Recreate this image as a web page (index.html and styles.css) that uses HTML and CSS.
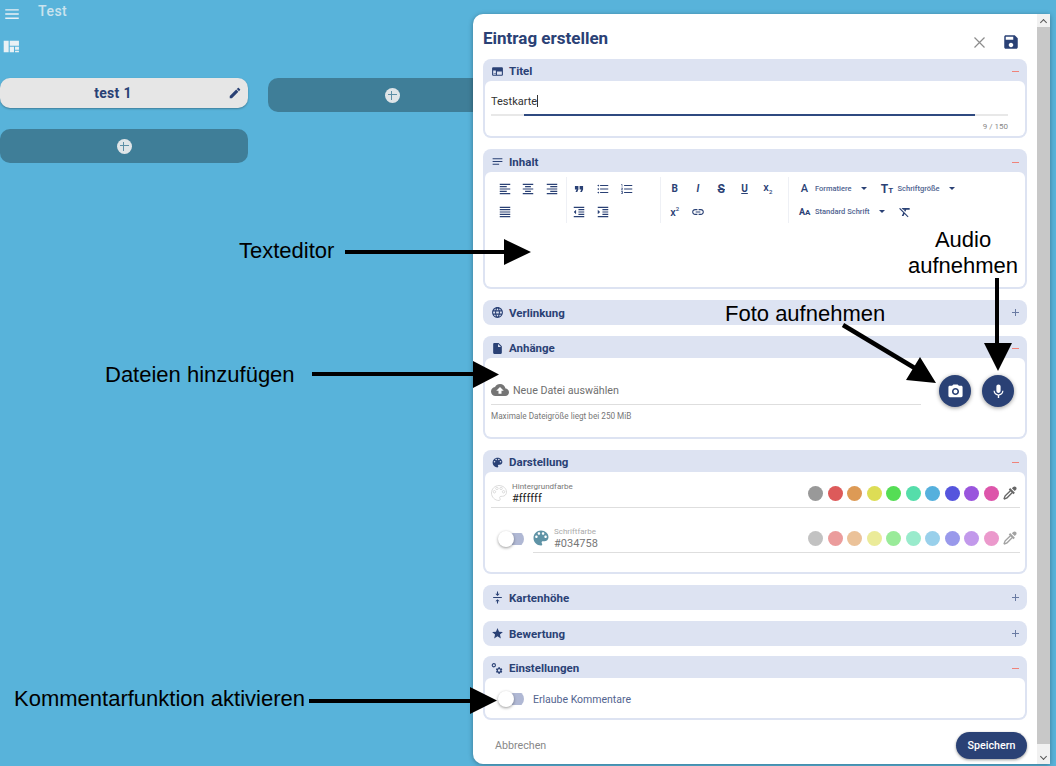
FILE: index.html
```html
<!DOCTYPE html>
<html lang="de">
<head>
    <meta charset="UTF-8">
    <title>Eintrag erstellen</title>
    <link rel="stylesheet" href="styles.css">
</head>
<body>
    <svg class="sprite" xmlns="http://www.w3.org/2000/svg">
        <symbol id="i-menu" viewBox="0 0 24 24"><path d="M3 18.500h18v-1.800H3v1.800zm0-5.600h18v-1.800H3v1.800zM3 5.500v1.800h18V5.500H3z"/></symbol>
        <symbol id="i-quilt" viewBox="0 0 24 24"><path d="M1 4h7v16H1zM9.500 4h13v7h-13zM9.500 12.500h6V20h-6zM17 12.500h5.500v4H17zM17 18h5.500v2H17z"/></symbol>
        <symbol id="i-pencil" viewBox="0 0 24 24"><path d="M3 17.250V21h3.750L17.810 9.940l-3.750-3.750L3 17.250zM20.710 7.040c.39-.39.39-1.020 0-1.410l-2.340-2.340c-.39-.39-1.020-.39-1.410 0l-1.830 1.830 3.750 3.750 1.830-1.830z"/></symbol>
        <symbol id="i-save" viewBox="0 0 24 24"><path d="M17 3H5c-1.110 0-2 .9-2 2v14c0 1.100.89 2 2 2h14c1.100 0 2-.9 2-2V7l-4-4zm-5 16c-1.660 0-3-1.340-3-3s1.340-3 3-3 3 1.340 3 3-1.340 3-3 3zm3-10H5V5h10v4z"/></symbol>
        <symbol id="i-title" viewBox="0 0 24 24"><path d="M4 4h16a2 2 0 0 1 2 2v12a2 2 0 0 1-2 2H4a2 2 0 0 1-2-2V6a2 2 0 0 1 2-2zm0 6v8h5v-2H5v-1h4v-5H4zm7 2v6h9v-6h-9z"/></symbol>
        <symbol id="i-notes" viewBox="0 0 24 24"><path d="M3 18h12v-2H3v2zM3 6v2h18V6H3zm0 7h18v-2H3v2z"/></symbol>
        <symbol id="i-globe" viewBox="0 0 24 24"><path d="M11.990 2C6.470 2 2 6.480 2 12s4.470 10 9.990 10C17.520 22 22 17.520 22 12S17.520 2 11.990 2zm6.930 6h-2.950c-.32-1.250-.78-2.450-1.380-3.560 1.840.63 3.370 1.910 4.330 3.560zM12 4.040c.83 1.200 1.480 2.530 1.910 3.960h-3.820c.43-1.430 1.080-2.760 1.910-3.960zM4.260 14C4.100 13.360 4 12.690 4 12s.1-1.360.26-2h3.380c-.08.66-.14 1.320-.14 2 0 .68.06 1.340.14 2H4.260zm.82 2h2.950c.32 1.250.78 2.450 1.380 3.560-1.840-.63-3.370-1.900-4.330-3.560zm2.950-8H5.080c.96-1.660 2.490-2.930 4.330-3.560C8.810 5.550 8.350 6.750 8.030 8zM12 19.960c-.83-1.200-1.480-2.530-1.910-3.960h3.820c-.43 1.430-1.080 2.760-1.910 3.960zM14.340 14H9.660c-.09-.66-.16-1.320-.16-2 0-.68.07-1.350.16-2h4.680c.09.65.16 1.320.16 2 0 .68-.07 1.340-.16 2zm.25 5.560c.6-1.110 1.060-2.310 1.380-3.560h2.950c-.96 1.650-2.490 2.930-4.330 3.560zM16.360 14c.08-.66.14-1.320.14-2 0-.68-.06-1.340-.14-2h3.380c.16.64.26 1.310.26 2s-.1 1.360-.26 2h-3.380z"/></symbol>
        <symbol id="i-file" viewBox="0 0 24 24"><path d="M14 2H6c-1.100 0-1.990.9-1.990 2L4 20c0 1.100.89 2 1.990 2H18c1.100 0 2-.9 2-2V8l-6-6zm-1 7V3.500L18.500 9H13z"/></symbol>
        <symbol id="i-palette" viewBox="0 0 24 24"><path d="M12 3c-4.970 0-9 4.030-9 9s4.030 9 9 9c.83 0 1.500-.67 1.500-1.500 0-.39-.15-.74-.39-1.010-.23-.26-.38-.61-.38-.99 0-.83.67-1.500 1.500-1.500H16c2.760 0 5-2.240 5-5 0-4.420-4.030-8-9-8zm-5.500 9c-.83 0-1.500-.67-1.500-1.500S5.670 9 6.500 9 8 9.670 8 10.500 7.330 12 6.500 12zm3-4C8.670 8 8 7.330 8 6.500S8.670 5 9.500 5s1.500.67 1.500 1.500S10.330 8 9.500 8zm5 0c-.83 0-1.500-.67-1.500-1.500S13.670 5 14.500 5s1.500.67 1.500 1.500S15.330 8 14.500 8zm3 4c-.83 0-1.500-.67-1.500-1.500S16.670 9 17.500 9s1.500.67 1.500 1.500-.67 1.500-1.500 1.500z"/></symbol>
        <symbol id="i-height" viewBox="0 0 24 24"><path d="M8 19h3v4h2v-4h3l-4-4-4 4zm8-14h-3V1h-2v4H8l4 4 4-4zM4 11v2h16v-2H4z"/></symbol>
        <symbol id="i-star" viewBox="0 0 24 24"><path d="M12 17.270L18.180 21l-1.640-7.030L22 9.240l-7.190-.61L12 2 9.190 8.630 2 9.240l5.460 4.730L5.820 21z"/></symbol>
        <symbol id="i-gear" viewBox="0 0 24 24"><path d="M19.140 12.940c.04-.3.06-.61.06-.94 0-.32-.02-.64-.07-.94l2.030-1.580c.18-.14.23-.41.12-.61l-1.920-3.320c-.12-.22-.37-.29-.59-.22l-2.390.96c-.5-.38-1.030-.7-1.620-.94l-.36-2.540c-.04-.24-.24-.41-.48-.41h-3.840c-.24 0-.43.17-.47.41l-.36 2.540c-.59.24-1.130.57-1.620.94l-2.390-.96c-.22-.08-.47 0-.59.22L2.740 8.870c-.12.21-.08.47.12.61l2.030 1.580c-.05.3-.09.63-.09.94s.02.64.07.94l-2.030 1.580c-.18.14-.23.41-.12.61l1.920 3.320c.12.22.37.29.59.22l2.390-.96c.5.38 1.030.7 1.620.94l.36 2.540c.05.24.24.41.48.41h3.840c.24 0 .44-.17.47-.41l.36-2.540c.59-.24 1.130-.56 1.620-.94l2.390.96c.22.08.47 0 .59-.22l1.920-3.320c.12-.22.07-.47-.12-.61l-2.010-1.580zM12 15.600c-1.980 0-3.600-1.620-3.600-3.600s1.620-3.600 3.600-3.600 3.600 1.620 3.600 3.600-1.620 3.600-3.600 3.600z"/></symbol>
        <symbol id="i-cloud" viewBox="0 0 24 24"><path d="M19.350 10.040C18.670 6.590 15.640 4 12 4 9.110 4 6.600 5.640 5.350 8.040 2.340 8.360 0 10.910 0 14c0 3.310 2.690 6 6 6h13c2.760 0 5-2.240 5-5 0-2.640-2.050-4.780-4.650-4.960zM14 13v4h-4v-4H7l5-5 5 5h-3z"/></symbol>
        <symbol id="i-camera" viewBox="0 0 24 24"><path d="M9 2L7.170 4H4c-1.100 0-2 .9-2 2v12c0 1.100.9 2 2 2h16c1.100 0 2-.9 2-2V6c0-1.100-.9-2-2-2h-3.170L15 2H9zm3 15c-2.760 0-5-2.240-5-5s2.240-5 5-5 5 2.240 5 5-2.240 5-5 5zm0-2.200a2.800 2.800 0 1 0 0-5.600 2.800 2.800 0 0 0 0 5.600z" fill-rule="evenodd"/></symbol>
        <symbol id="i-mic" viewBox="0 0 24 24"><path d="M12 14c1.660 0 2.990-1.340 2.990-3L15 5c0-1.660-1.340-3-3-3S9 3.340 9 5v6c0 1.660 1.340 3 3 3zm5.300-3c0 3-2.540 5.100-5.300 5.100S6.700 14 6.700 11H5c0 3.410 2.720 6.230 6 6.720V21h2v-3.280c3.280-.48 6-3.300 6-6.720h-1.700z"/></symbol>
        <symbol id="i-dropper" viewBox="0 0 24 24"><path d="M19.350 11.720L17.220 13.850 15.810 12.430 8.100 20.140 3.500 22 2 20.500 3.860 15.900 11.570 8.190 10.150 6.780 12.280 4.650 19.350 11.720M16.760 3C17.930 1.830 19.830 1.830 21 3 22.170 4.170 22.170 6.070 21 7.240L19.080 9.160 14.840 4.920 16.760 3M5.560 17.030L4.500 19.500 6.970 18.440 14.400 11 13 9.600 5.560 17.030Z"/></symbol>
        <symbol id="i-left" viewBox="0 0 24 24"><path d="M15 15H3v2h12v-2zm0-8H3v2h12V7zM3 13h18v-2H3v2zm0 8h18v-2H3v2zM3 3v2h18V3H3z"/></symbol>
        <symbol id="i-center" viewBox="0 0 24 24"><path d="M7 15v2h10v-2H7zm-4 6h18v-2H3v2zm0-8h18v-2H3v2zm4-6v2h10V7H7zM3 3v2h18V3H3z"/></symbol>
        <symbol id="i-right" viewBox="0 0 24 24"><path d="M3 21h18v-2H3v2zm6-4h12v-2H9v2zm-6-4h18v-2H3v2zm6-4h12V7H9v2zM3 3v2h18V3H3z"/></symbol>
        <symbol id="i-justify" viewBox="0 0 24 24"><path d="M3 21h18v-2H3v2zm0-4h18v-2H3v2zm0-4h18v-2H3v2zm0-4h18V7H3v2zm0-6v2h18V3H3z"/></symbol>
        <symbol id="i-quote" viewBox="0 0 24 24"><path d="M6 17h3l2-4V7H5v6h3zm8 0h3l2-4V7h-6v6h3z"/></symbol>
        <symbol id="i-ul" viewBox="0 0 24 24"><path d="M4 10.500c-.83 0-1.500.67-1.500 1.500s.67 1.500 1.500 1.500 1.500-.67 1.500-1.500-.67-1.500-1.500-1.500zm0-6c-.83 0-1.500.67-1.500 1.500S3.170 7.500 4 7.500 5.500 6.830 5.500 6 4.830 4.500 4 4.500zm0 12c-.83 0-1.500.68-1.500 1.500s.68 1.500 1.500 1.500 1.500-.68 1.500-1.500-.67-1.500-1.500-1.500zM7 19h14v-2H7v2zm0-6h14v-2H7v2zm0-8v2h14V5H7z"/></symbol>
        <symbol id="i-ol" viewBox="0 0 24 24"><path d="M2 17h2v.5H3v1h1v.5H2v1h3v-4H2v1zm1-9h1V4H2v1h1v3zm-1 3h1.800L2 13.100v.9h3v-1H3.200L5 10.900V10H2v1zm5-6v2h14V5H7zm0 14h14v-2H7v2zm0-6h14v-2H7v2z"/></symbol>
        <symbol id="i-outdent" viewBox="0 0 24 24"><path d="M11 17h10v-2H11v2zm-8-5l4 4V8l-4 4zm0 9h18v-2H3v2zM3 3v2h18V3H3zm8 6h10V7H11v2zm0 4h10v-2H11v2z"/></symbol>
        <symbol id="i-indent" viewBox="0 0 24 24"><path d="M3 21h18v-2H3v2zM3 8v8l4-4-4-4zm8 9h10v-2H11v2zM3 3v2h18V3H3zm8 6h10V7H11v2zm0 4h10v-2H11v2z"/></symbol>
        <symbol id="i-link" viewBox="0 0 24 24"><path d="M3.900 12c0-1.710 1.390-3.100 3.100-3.100h4V7H7c-2.760 0-5 2.240-5 5s2.240 5 5 5h4v-1.900H7c-1.710 0-3.100-1.390-3.100-3.100zM8 13h8v-2H8v2zm9-6h-4v1.900h4c1.710 0 3.100 1.390 3.100 3.100s-1.390 3.100-3.100 3.100h-4V17h4c2.760 0 5-2.240 5-5s-2.240-5-5-5z"/></symbol>
        <symbol id="i-clear" viewBox="0 0 24 24"><path d="M3.270 5L2 6.270l6.970 6.970L6.500 19h3l1.570-3.660L16.730 21 18 19.730 3.550 5.270 3.270 5zM6 5v.18L8.820 8h2.400l-.72 1.680 2.100 2.100L14.210 8H20V5H6z"/></symbol>
    </svg>

    <div class="page">
        <header class="topbar">
            <div class="side-icons">
                <svg class="icon-menu"><use href="#i-menu"/></svg>
                <svg class="icon-quilt"><use href="#i-quilt"/></svg>
            </div>
            <div class="board-name">Test</div>
        </header>

        <main class="board">
            <div class="card">
                <span class="card-title">test 1</span>
                <svg class="card-edit"><use href="#i-pencil"/></svg>
            </div>
            <div class="card-add"><span class="plus-circle"></span></div>
            <div class="card-add"><span class="plus-circle"></span></div>
        </main>

        <section class="dialog">
            <div class="dialog-scroll">
                <div class="dialog-head">
                    <h1>Eintrag erstellen</h1>
                    <svg class="close" viewBox="0 0 11 11"><path d="M.5.5l10 10M10.500.5l-10 10"/></svg>
                    <svg class="head-save"><use href="#i-save"/></svg>
                </div>

                <div class="panel">
                    <div class="panel-head"><svg class="panel-icon"><use href="#i-title"/></svg><span>Titel</span><b class="minus"></b></div>
                    <div class="panel-body title-body">
                        <div class="title-value">Testkarte<i class="caret"></i></div>
                        <div class="title-line"><span></span></div>
                        <div class="counter">9 / 150</div>
                    </div>
                </div>

                <div class="panel">
                    <div class="panel-head head-inhalt"><svg class="panel-icon"><use href="#i-notes"/></svg><span>Inhalt</span><b class="minus"></b></div>
                    <div class="panel-body editor-body">
                        <div class="toolbar">
                            <div class="tool-group group-align">
                                <svg><use href="#i-left"/></svg>
                                <svg><use href="#i-center"/></svg>
                                <svg><use href="#i-right"/></svg>
                                <svg><use href="#i-justify"/></svg>
                            </div>
                            <div class="tool-group group-list">
                                <svg><use href="#i-quote"/></svg>
                                <svg><use href="#i-ul"/></svg>
                                <svg><use href="#i-ol"/></svg>
                                <svg><use href="#i-outdent"/></svg>
                                <svg><use href="#i-indent"/></svg>
                            </div>
                            <div class="tool-group group-format">
                                <span class="t-bold">B</span>
                                <span class="t-italic">I</span>
                                <span class="t-strike">S</span>
                                <span class="t-under">U</span>
                                <span class="t-script">x<sub>2</sub></span>
                                <span class="t-script">x<sup>2</sup></span>
                                <svg><use href="#i-link"/></svg>
                            </div>
                            <div class="tool-group group-select">
                                <div class="select-row">
                                    <span class="sel-glyph">A</span>
                                    <span class="sel-label sel-format">Formatiere</span>
                                    <i class="sel-arrow"></i>
                                    <span class="sel-glyph sel-size">T<small>T</small></span>
                                    <span class="sel-label sel-sizename">Schriftgröße</span>
                                    <i class="sel-arrow"></i>
                                </div>
                                <div class="select-row">
                                    <span class="sel-glyph sel-font">A<small>A</small></span>
                                    <span class="sel-label sel-family">Standard Schrift</span>
                                    <i class="sel-arrow"></i>
                                    <svg class="sel-clear"><use href="#i-clear"/></svg>
                                </div>
                            </div>
                        </div>
                    </div>
                </div>

                <div class="panel">
                    <div class="panel-head closed"><svg class="panel-icon"><use href="#i-globe"/></svg><span>Verlinkung</span><b class="plus"></b></div>
                </div>

                <div class="panel">
                    <div class="panel-head"><svg class="panel-icon"><use href="#i-file"/></svg><span>Anhänge</span><b class="minus"></b></div>
                    <div class="panel-body files-body">
                        <div class="file-col">
                            <div class="file-pick"><svg><use href="#i-cloud"/></svg><span>Neue Datei auswählen</span></div>
                            <div class="file-hint">Maximale Dateigröße liegt bei 250 MiB</div>
                        </div>
                        <button class="fab"><svg><use href="#i-camera"/></svg></button>
                        <button class="fab"><svg><use href="#i-mic"/></svg></button>
                    </div>
                </div>

                <div class="panel">
                    <div class="panel-head"><svg class="panel-icon"><use href="#i-palette"/></svg><span>Darstellung</span><b class="minus"></b></div>
                    <div class="panel-body colors-body">
                        <div class="color-row">
                            <svg class="color-palette palette-white"><use href="#i-palette"/></svg>
                            <div class="color-text">
                                <label>Hintergrundfarbe</label>
                                <div>#ffffff</div>
                            </div>
                            <div class="swatches">
                                <i class="c1"></i><i class="c2"></i><i class="c3"></i><i class="c4"></i><i class="c5"></i><i class="c6"></i><i class="c7"></i><i class="c8"></i><i class="c9"></i><i class="c10"></i>
                                <svg><use href="#i-dropper"/></svg>
                            </div>
                        </div>
                        <div class="font-color">
                            <span class="switch"></span>
                            <div class="color-row muted">
                                <svg class="color-palette palette-teal"><use href="#i-palette"/></svg>
                                <div class="color-text">
                                    <label>Schriftfarbe</label>
                                    <div>#034758</div>
                                </div>
                                <div class="swatches">
                                    <i class="c1"></i><i class="c2"></i><i class="c3"></i><i class="c4"></i><i class="c5"></i><i class="c6"></i><i class="c7"></i><i class="c8"></i><i class="c9"></i><i class="c10"></i>
                                    <svg><use href="#i-dropper"/></svg>
                                </div>
                            </div>
                        </div>
                    </div>
                </div>

                <div class="panel">
                    <div class="panel-head closed"><svg class="panel-icon"><use href="#i-height"/></svg><span>Kartenhöhe</span><b class="plus"></b></div>
                </div>

                <div class="panel panel-tight">
                    <div class="panel-head closed"><svg class="panel-icon"><use href="#i-star"/></svg><span>Bewertung</span><b class="plus"></b></div>
                </div>

                <div class="panel">
                    <div class="panel-head">
                        <svg class="panel-icon" viewBox="0 0 16 16">
                            <circle cx="3.500" cy="4" r="2" fill="none" stroke="currentColor" stroke-width="1.300"/>
                            <use href="#i-gear" x="5" y="5.500" width="10" height="10"/>
                        </svg>
                        <span>Einstellungen</span><b class="minus"></b>
                    </div>
                    <div class="panel-body comments-body">
                        <span class="switch"></span>
                        <span class="comments-label">Erlaube Kommentare</span>
                    </div>
                </div>

                <div class="dialog-foot">
                    <span class="cancel">Abbrechen</span>
                    <button class="save-btn">Speichern</button>
                </div>
            </div>

            <div class="scrollbar">
                <span class="scroll-btn"><i class="chev-up"></i></span>
                <span class="scroll-thumb"></span>
                <span class="scroll-btn"><i class="chev-down"></i></span>
            </div>
        </section>

        <!-- notes drawn on top of the screenshot -->
        <svg class="arrows" viewBox="0 0 1056 766">
            <path d="M345 252H508M312 374H476M309 701H472M997 278V346" stroke="#000" stroke-width="4" fill="none"/>
            <path d="M843 325L918 370" stroke="#000" stroke-width="4.500" fill="none"/>
            <path d="M504 239L531 252 504 265zM473 361L499 374.500 473 388zM470 687L497 700.500 470 714zM984 343H1012L998 371zM920 357L936 383 906 380z"/>
        </svg>
        <div class="note note-editor">Texteditor</div>
        <div class="note note-files">Dateien hinzufügen</div>
        <div class="note note-photo">Foto aufnehmen</div>
        <div class="note note-audio">Audio<br>aufnehmen</div>
        <div class="note note-comments">Kommentarfunktion aktivieren</div>
    </div>
</body>
</html>
```

FILE: styles.css
```css
html,body {
    height: 100%;
}
body {
    margin: 0;
    background: #58b3da;
    font-family: Roboto, "Liberation Sans", sans-serif;
    overflow: hidden;
}
.sprite {
    display: none;
}
.page {
    position: relative;
    height: 766px;
    overflow: hidden;
}

/* left side: board */
.topbar {
    display: flex;
    height: 78px;
}
.side-icons {
    width: 38px;
    display: flex;
    flex-direction: column;
    padding: 5px 0 0 3px;
    box-sizing: border-box;
}
.side-icons svg {
    fill: #e9f1f5;
}
.icon-menu {
    width: 18px;
    height: 18px;
}
.icon-quilt {
    width: 17px;
    height: 17px;
    margin-top: 15px;
}
.board-name {
    color: #cbe3ee;
    font-size: 14px;
    font-weight: 500;
    letter-spacing: .5px;
    padding-top: 3px;
}
.board {
    display: grid;
    grid-template-columns: 248px 248px;
    column-gap: 20px;
    row-gap: 17px;
    align-items: start;
}
.card {
    height: 30px;
    background: #e6e6e6;
    border-radius: 10px;
    box-shadow: 0 1px 2px rgba(0,0,0,.3);
    display: flex;
    align-items: center;
    justify-content: center;
    position: relative;
}
.card-title {
    font-size: 14px;
    font-weight: 700;
    color: #2a4175;
    margin-right: 22px;
    letter-spacing: .3px;
}
.card-edit {
    position: absolute;
    right: 6px;
    top: 8px;
    width: 14px;
    height: 14px;
    fill: #2a4175;
}
.card-add {
    height: 34px;
    background: #3f7e98;
    border-radius: 10px;
    display: flex;
    align-items: center;
    justify-content: center;
}
.plus-circle {
    width: 15px;
    height: 15px;
    border-radius: 50%;
    background:
        linear-gradient(#5d8fa6, #5d8fa6) center / 9px 1.300px no-repeat,
        linear-gradient(#5d8fa6, #5d8fa6) center / 1.300px 9px no-repeat,
        #dfe5e8;
}

/* dialog */
.dialog {
    position: absolute;
    left: 473px;
    top: 14px;
    width: 577px;
    height: 750px;
    background: #fff;
    border-radius: 10px 0 0 10px;
    box-shadow: 0 1px 5px rgba(0,0,0,.35);
    display: flex;
    overflow: hidden;
}
.dialog-scroll {
    flex: 1;
    padding: 0 10px;
    display: flex;
    flex-direction: column;
    color: #2a4175;
}
.dialog-head {
    height: 45px;
    flex: none;
    display: flex;
    align-items: center;
}
.dialog-head h1 {
    flex: 1;
    margin: 3px 0 0 0;
    font-size: 17px;
    font-weight: 700;
}
.close {
    width: 11px;
    height: 11px;
    margin: 11px 17px 0 0;
    fill: none;
    stroke: #8c8c8c;
    stroke-width: 1.200;
}
.head-save {
    width: 18px;
    height: 18px;
    margin: 11px 7px 0 0;
    fill: #2a4175;
}
.panel {
    flex: none;
    background: #dde3f2;
    border-radius: 8px;
    margin-bottom: 11px;
    padding: 0 2px 2px 2px;
}
.panel-tight {
    margin-bottom: 10px;
}
.panel-head {
    height: 22px;
    display: flex;
    align-items: center;
    padding: 2px 6px 0 6px;
    box-sizing: border-box;
    font-size: 11.500px;
    font-weight: 700;
}
.panel-head.closed {
    height: 23px;
}
.head-inhalt {
    height: 23px;
}
.panel-head span {
    flex: 1;
}
.panel-icon {
    width: 13px;
    height: 13px;
    margin-right: 5px;
    fill: currentColor;
}
.minus {
    width: 7px;
    height: 1px;
    margin-top: 1px;
    background: #f0837a;
}
.plus {
    width: 7px;
    height: 7px;
    background:
        linear-gradient(#6a7ba3, #6a7ba3) center / 7px 1px no-repeat,
        linear-gradient(#6a7ba3, #6a7ba3) center / 1px 7px no-repeat;
}
.panel-body {
    background: #fff;
    border-radius: 6px;
}

/* Titel */
.title-body {
    height: 55px;
    padding: 14px 17px 0 6px;
    box-sizing: border-box;
    color: #333;
}
.title-value {
    font-size: 11px;
    line-height: 14px;
    height: 19px;
}
.caret {
    display: inline-block;
    width: 1px;
    height: 12px;
    background: #333;
    vertical-align: -2px;
}
.title-line {
    height: 2px;
    background: #e8e8e8;
    display: flex;
}
.title-line span {
    height: 2px;
    width: 451px;
    margin-left: 33px;
    background: #2f4a80;
}
.counter {
    margin-top: 6px;
    text-align: right;
    font-size: 8px;
    color: #888;
}

/* Inhalt */
.editor-body {
    height: 115px;
    padding-top: 5px;
    box-sizing: border-box;
}
.toolbar {
    display: flex;
    margin-left: 8px;
    height: 46px;
}
.tool-group {
    display: grid;
    align-content: start;
    grid-auto-rows: 23px;
    justify-items: center;
    align-items: center;
    box-sizing: border-box;
    border-right: 1px solid #eef0f5;
    color: #2a4175;
}
.tool-group svg {
    fill: #2a4175;
    width: 14px;
    height: 14px;
}
.group-align {
    width: 74px;
    grid-template-columns: repeat(3, 23.500px);
}
.group-list {
    width: 94px;
    grid-template-columns: repeat(3, 24px);
}
.group-format {
    width: 128px;
    padding-left: 2px;
    grid-template-columns: repeat(5, 23.300px);
    font-size: 10px;
    font-weight: 700;
}
.t-italic {
    font-style: italic;
}
.t-strike {
    text-decoration: line-through;
    font-size: 12px;
}
.t-under {
    text-decoration: underline;
}
.t-script {
    font-weight: 500;
    font-size: 11px;
    line-height: 1;
}
.t-script sub,
.t-script sup {
    font-size: 6px;
}
.group-select {
    border-right: none;
    display: block;
    justify-items: normal;
    padding-left: 10px;
}
.select-row {
    height: 23px;
    display: flex;
    align-items: center;
}
.sel-glyph {
    width: 11px;
    font-size: 11px;
    font-weight: 500;
    text-align: center;
}
.sel-glyph small {
    font-size: 8px;
}
.sel-size {
    width: 17px;
    margin-left: 12px;
    font-weight: 700;
    font-size: 12px;
    white-space: nowrap;
}
.sel-font {
    white-space: nowrap;
    font-size: 9px;
    font-weight: 700;
}
.sel-label {
    font-size: 7.500px;
    font-weight: 500;
    color: #4f6390;
    margin-left: 5px;
    white-space: nowrap;
}
.sel-sizename {
    margin-left: 2px;
}
.sel-arrow {
    width: 0;
    height: 0;
    margin-left: 9px;
    border-left: 3px solid transparent;
    border-right: 3px solid transparent;
    border-top: 3px solid #2a4175;
}
.tool-group .sel-clear {
    margin-left: 13px;
}

/* Anhänge */
.files-body {
    height: 79px;
    display: flex;
    padding: 22px 11px 0 6px;
    box-sizing: border-box;
    align-items: flex-start;
}
.file-col {
    width: 430px;
    margin-right: 18px;
}
.file-pick {
    display: flex;
    align-items: center;
    height: 25px;
    padding-bottom: 4px;
    box-sizing: border-box;
    border-bottom: 1px solid #dedede;
    font-size: 10.700px;
    color: #6f6f6f;
}
.file-pick svg {
    width: 18px;
    height: 18px;
    fill: #757575;
    margin-right: 4px;
}
.file-hint {
    margin-top: 6px;
    font-size: 8.200px;
    color: #777;
}
.fab {
    width: 32px;
    height: 32px;
    flex: none;
    border: none;
    padding: 0;
    margin: -5px 11px 0 0;
    border-radius: 50%;
    background: #2a4175;
    box-shadow: 0 1px 4px rgba(0,0,0,.4);
    display: flex;
    align-items: center;
    justify-content: center;
}
.fab:last-child {
    margin-right: 0;
}
.fab svg {
    width: 17px;
    height: 17px;
    fill: #fff;
}

/* Darstellung */
.colors-body {
    height: 100px;
    padding: 7px 5px 0 6px;
    box-sizing: border-box;
}
.color-row {
    display: flex;
    align-items: center;
    height: 28px;
    padding-right: 2px;
    border-bottom: 1px solid #dedede;
    color: #222;
}
.color-palette {
    width: 20px;
    height: 20px;
    margin: 0 3px 0 -2px;
    flex: none;
}
.palette-white {
    fill: #fff;
    stroke: #d5d5d5;
    stroke-width: 1;
}
.palette-teal {
    fill: #5f93a6;
}
.color-text {
    flex: 1;
    font-size: 11px;
    line-height: 14px;
    margin-top: 2px;
}
.color-text div {
    margin-top: 1px;
}
.color-text label {
    display: block;
    font-size: 8px;
    line-height: 9px;
    color: #777;
}
.swatches {
    display: flex;
    align-items: center;
    gap: 4.500px;
}
.swatches i {
    width: 15px;
    height: 15px;
    border-radius: 50%;
}
.swatches svg {
    width: 16px;
    height: 16px;
    fill: #666;
    margin-left: -1px;
}
.c1 { background: #999; }
.c2 { background: #dd5a5a; }
.c3 { background: #dd9a55; }
.c4 { background: #dddd55; }
.c5 { background: #55dd55; }
.c6 { background: #55ddaa; }
.c7 { background: #55b0dd; }
.c8 { background: #5555dd; }
.c9 { background: #9955dd; }
.c10 { background: #dd55aa; }
.font-color {
    display: flex;
    align-items: flex-end;
    margin-top: 16px;
}
.font-color .switch {
    margin: 0 9px 6px 7px;
}
.font-color .color-row {
    flex: 1;
}
.muted .color-text {
    color: #777;
}
.muted .color-text label {
    color: #aaa;
}
.muted .swatches i,
.muted .swatches svg {
    opacity: .6;
}
.switch {
    display: block;
    position: relative;
    flex: none;
    width: 26px;
    height: 16px;
    background: linear-gradient(#b0b8d4, #b0b8d4) 6px 2px / 20px 12px no-repeat;
    border-radius: 0 8px 8px 0;
}
.switch::before {
    content: "";
    position: absolute;
    left: 0;
    top: 0;
    width: 16px;
    height: 16px;
    border-radius: 50%;
    background: #fff;
    box-shadow: 0 1px 3px rgba(0,0,0,.4);
}

/* Einstellungen */
.comments-body {
    height: 40px;
    display: flex;
    align-items: center;
    padding: 2px 0 0 13px;
    box-sizing: border-box;
}
.comments-label {
    margin-left: 9px;
    font-size: 10.500px;
    color: #53648f;
}

/* footer */
.dialog-foot {
    margin-top: 1px;
    display: flex;
    justify-content: space-between;
    align-items: center;
    padding-left: 12px;
}
.cancel {
    font-size: 10.700px;
    color: #888;
}
.save-btn {
    width: 71px;
    height: 27px;
    border: none;
    padding: 0;
    border-radius: 14px;
    background: #2a4175;
    color: #fff;
    font-family: Roboto, "Liberation Sans", sans-serif;
    font-size: 10.700px;
    font-weight: 500;
    box-shadow: 0 1px 3px rgba(0,0,0,.4);
}

/* scrollbar */
.scrollbar {
    width: 13px;
    flex: none;
    display: flex;
    flex-direction: column;
    background: #c8c8c8;
}
.scroll-btn {
    height: 13px;
    flex: none;
    background: #f1f1f1;
    display: flex;
    align-items: center;
    justify-content: center;
}
.scroll-thumb {
    flex: 1;
}
.scroll-btn:last-child {
    height: 20px;
    align-items: flex-end;
    padding-bottom: 3px;
    box-sizing: border-box;
}
.chev-up,
.chev-down {
    width: 4px;
    height: 4px;
    border-left: 1.500px solid #555;
    border-top: 1.500px solid #555;
    transform: rotate(45deg);
    margin-top: 3px;
}
.chev-down {
    transform: rotate(225deg);
    margin: 0 0 2px 0;
}

/* notes over the screenshot */
.arrows {
    position: absolute;
    left: 0;
    top: 0;
    width: 1056px;
    height: 766px;
}
.note {
    position: absolute;
    font-family: "Liberation Sans", Arial, sans-serif;
    font-size: 22px;
    line-height: 26px;
    color: #000;
    white-space: nowrap;
}
.note-editor {
    left: 239px;
    top: 238px;
}
.note-files {
    left: 105px;
    top: 362px;
}
.note-photo {
    left: 725px;
    top: 301px;
}
.note-audio {
    left: 908px;
    top: 227px;
    text-align: center;
}
.note-comments {
    left: 14px;
    top: 686px;
}
```
